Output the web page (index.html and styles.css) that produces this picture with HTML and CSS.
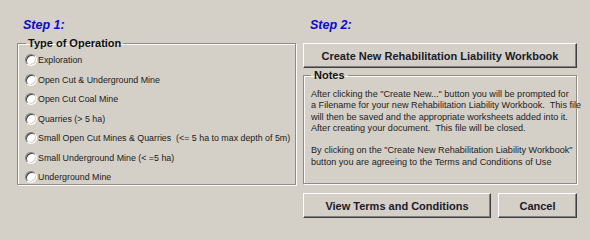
FILE: index.html
```html
<!DOCTYPE html>
<html>
<head>
<meta charset="utf-8">
<title>Rehabilitation Liability</title>
<link rel="stylesheet" href="styles.css">
</head>
<body>
<div class="dialog">
  <div class="col col-left">
    <h2 class="step">Step 1:</h2>
    <fieldset class="group ops">
      <legend class="group-title">Type of Operation</legend>
      <label class="opt"><input type="radio" name="op" class="radio"><span>Exploration</span></label>
      <label class="opt"><input type="radio" name="op" class="radio"><span>Open Cut &amp; Underground Mine</span></label>
      <label class="opt"><input type="radio" name="op" class="radio"><span>Open Cut Coal Mine</span></label>
      <label class="opt"><input type="radio" name="op" class="radio"><span>Quarries (&gt; 5 ha)</span></label>
      <label class="opt"><input type="radio" name="op" class="radio"><span>Small Open Cut Mines &amp; Quarries&nbsp; (&lt;= 5 ha to max depth of 5m)</span></label>
      <label class="opt"><input type="radio" name="op" class="radio"><span>Small Underground Mine (&lt; =5 ha)</span></label>
      <label class="opt"><input type="radio" name="op" class="radio"><span>Underground Mine</span></label>
    </fieldset>
  </div>
  <div class="col col-right">
    <h2 class="step">Step 2:</h2>
    <button class="btn btn-create">Create New Rehabilitation Liability Workbook</button>
    <fieldset class="group notes">
      <legend class="group-title notes-title">Notes</legend>
      <p class="note">After clicking the "Create New..." button you will be prompted for<br>a Filename for your new Rehabilitation Liability Workbook.&nbsp; This file<br>will then be saved and the appropriate worksheets added into it.<br>After creating your document.&nbsp; This file will be closed.</p>
      <p class="note">By clicking on the "Create New Rehabilitation Liability Workbook"<br>button you are agreeing to the Terms and Conditions of Use</p>
    </fieldset>
    <div class="actions">
      <button class="btn btn-terms">View Terms and Conditions</button>
      <button class="btn btn-cancel">Cancel</button>
    </div>
  </div>
</div>
</body>
</html>
```
FILE: styles.css
```css
html, body {
  margin: 0;
  padding: 0;
  background: #d4d0c8;
}
body {
  width: 590px;
  height: 232px;
  overflow: hidden;
  font-family: "Liberation Sans", Arial, sans-serif;
  color: #111;
}
.dialog {
  display: grid;
  grid-template-columns: 279px 274px;
  column-gap: 7px;
  padding-left: 17px;
}
.col {
  display: flex;
  flex-direction: column;
}
.step {
  margin: 0;
  padding: 17px 0 0 6px;
  height: 20px;
  line-height: 16px;
  font-size: 12.5px;
  font-weight: bold;
  font-style: italic;
  color: #0a0acc;
}
.col-right .step {
  padding-left: 7px;
}
.group {
  margin: 0;
  min-width: 0;
  border: 1px solid #8e8b85;
  box-shadow: 1px 1px 0 #fbfaf7, inset 1px 1px 0 #fbfaf7;
}
.group-title {
  padding: 0 2px;
  font-size: 11px;
  line-height: 12px;
  font-weight: bold;
  color: #111;
}
.ops {
  padding: 4.5px 8px 0 7px;
  display: flex;
  flex-direction: column;
  gap: 6.5px;
  height: 148px;
  box-sizing: border-box;
}
.ops .group-title {
  margin-left: 1px;
}
.opt {
  display: flex;
  align-items: center;
  height: 13px;
  font-size: 8.85px;
  white-space: nowrap;
  color: #1a1a1a;
}
.radio {
  appearance: none;
  -webkit-appearance: none;
  margin: 0 1px 0 0;
  width: 12px;
  height: 12px;
  border-radius: 50%;
  background: #fff;
  border: 1px solid;
  border-color: #808080 #fbfaf7 #fbfaf7 #808080;
  box-shadow: inset 1px 1px 0 #404040, inset -1px -1px 0 #d4d0c8;
  box-sizing: border-box;
  flex: none;
}
.btn {
  font-family: "Liberation Sans", Arial, sans-serif;
  font-weight: bold;
  font-size: 11px;
  color: #1a1a2a;
  background: #d4d0c8;
  border: 1px solid;
  border-color: #fff #404040 #404040 #fff;
  box-shadow: inset -1px -1px 0 #808080;
  height: 25px;
  padding: 0;
  margin: 0;
}
.btn-create {
  margin-top: 6px;
  width: 274px;
}
.notes {
  margin-top: 1px;
  padding: 8px 2px 0 7px;
  height: 115px;
  box-sizing: border-box;
}
.notes-title {
  padding: 0 3px;
}
.note {
  margin: 0 0 10.7px 0;
  font-size: 9.1px;
  line-height: 11.4px;
  white-space: nowrap;
  color: #222;
}
.actions {
  display: flex;
  gap: 7px;
  margin-top: 9px;
}
.btn-terms {
  width: 188px;
}
.btn-cancel {
  width: 79px;
}
```
